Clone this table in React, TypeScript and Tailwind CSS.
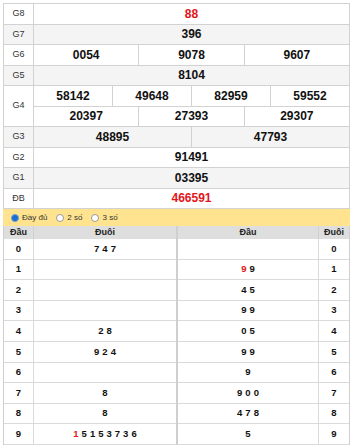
import React from 'react';

interface PrizeRow {
  label: string;
  rows: string[][];
  red?: boolean;
}

const prizes: PrizeRow[] = [
  { label: 'G8', rows: [['88']], red: true },
  { label: 'G7', rows: [['396']] },
  { label: 'G6', rows: [['0054', '9078', '9607']] },
  { label: 'G5', rows: [['8104']] },
  { label: 'G4', rows: [['58142', '49648', '82959', '59552'], ['20397', '27393', '29307']] },
  { label: 'G3', rows: [['48895', '47793']] },
  { label: 'G2', rows: [['91491']] },
  { label: 'G1', rows: [['03395']] },
  { label: 'ĐB', rows: [['466591']], red: true },
];

// digits; a leading "*" marks the red one
const leftLoto: string[][] = [
  ['7', '4', '7'],
  [],
  [],
  [],
  ['2', '8'],
  ['9', '2', '4'],
  [],
  ['8'],
  ['8'],
  ['*1', '5', '1', '5', '3', '7', '3', '6'],
];

const rightLoto: string[][] = [
  [],
  ['*9', '9'],
  ['4', '5'],
  ['9', '9'],
  ['0', '5'],
  ['9', '9'],
  ['9'],
  ['9', '0', '0'],
  ['4', '7', '8'],
  ['5'],
];

const Digits: React.FC<{ list: string[] }> = ({ list }) => (
  <span className="flex gap-[3px]">
    {list.map((d, i) =>
      d.startsWith('*') ? (
        <span key={i} className="text-[#e3151a]">{d.slice(1)}</span>
      ) : (
        <span key={i}>{d}</span>
      )
    )}
  </span>
);

const Radio: React.FC<{ checked?: boolean; label: string }> = ({ checked, label }) => (
  <label className="flex items-center gap-[3px]">
    {checked ? (
      <span className="h-[8px] w-[8px] rounded-full border border-[#6a9fd8] bg-[#1c6fd1]" />
    ) : (
      <span className="h-[8px] w-[8px] rounded-full border border-[#9a9a9a] bg-white" />
    )}
    <span>{label}</span>
  </label>
);

export default function App() {
  return (
    <div className="min-h-[447px] bg-white pl-[3px] pt-[3px]" style={{ fontFamily: '"Liberation Sans", Arial, sans-serif' }}>
      <div className="w-[347px]">
        {/* prize table */}
        <div className="border-l border-t border-[#d2d2d2]">
          {prizes.map((p, idx) => (
            <div key={p.label} className={`flex ${idx % 2 === 1 ? 'bg-[#f4f4f4]' : 'bg-white'}`}>
              <div className="flex w-[30px] shrink-0 items-center justify-center border-b border-r border-[#d2d2d2] text-[9px] text-[#333]">
                {p.label}
              </div>
              <div className="flex flex-1 flex-col">
                {p.rows.map((cells, r) => (
                  <div key={r} className="flex h-[20.5px]">
                    {cells.map((c, ci) => (
                      <div
                        key={ci}
                        className={`flex flex-1 items-center justify-center border-b border-r border-[#d2d2d2] text-[12px] font-bold ${
                          p.red ? 'text-[#e3151a]' : 'text-[#111]'
                        }`}
                      >
                        {c}
                      </div>
                    ))}
                  </div>
                ))}
              </div>
            </div>
          ))}
        </div>

        {/* options bar */}
        <div className="flex h-[17px] items-center gap-[9px] bg-[#ffe38f] pl-[8px] text-[8px] text-[#333]">
          <Radio checked label="Đầy đủ" />
          <Radio label="2 số" />
          <Radio label="3 số" />
        </div>

        {/* loto table */}
        <div className="flex">
          <div className="w-[174px] border-l border-r border-[#cfcfcf]">
            <div className="flex h-[13px] bg-[#dedede] text-[9px] font-bold text-[#222]">
              <div className="flex w-[30px] items-center justify-center border-r border-[#d0d0d0]">Đầu</div>
              <div className="flex flex-1 items-center justify-center">Đuôi</div>
            </div>
            {leftLoto.map((list, i) => (
              <div key={i} className="flex h-[20.6px] border-b border-[#dadada] text-[9.5px] font-bold text-[#111]">
                <div className="flex w-[30px] items-center justify-center border-r border-[#dadada]">{i}</div>
                <div className="flex flex-1 items-center justify-center">
                  <Digits list={list} />
                </div>
              </div>
            ))}
          </div>
          <div className="w-[173px] border-l border-r border-[#cfcfcf]">
            <div className="flex h-[13px] bg-[#dedede] text-[9px] font-bold text-[#222]">
              <div className="flex flex-1 items-center justify-center border-r border-[#d0d0d0]">Đầu</div>
              <div className="flex w-[30px] items-center justify-center">Đuôi</div>
            </div>
            {rightLoto.map((list, i) => (
              <div key={i} className="flex h-[20.6px] border-b border-[#dadada] text-[9.5px] font-bold text-[#111]">
                <div className="flex flex-1 items-center justify-center border-r border-[#dadada]">
                  <Digits list={list} />
                </div>
                <div className="flex w-[30px] items-center justify-center">{i}</div>
              </div>
            ))}
          </div>
        </div>
      </div>
    </div>
  );
}
